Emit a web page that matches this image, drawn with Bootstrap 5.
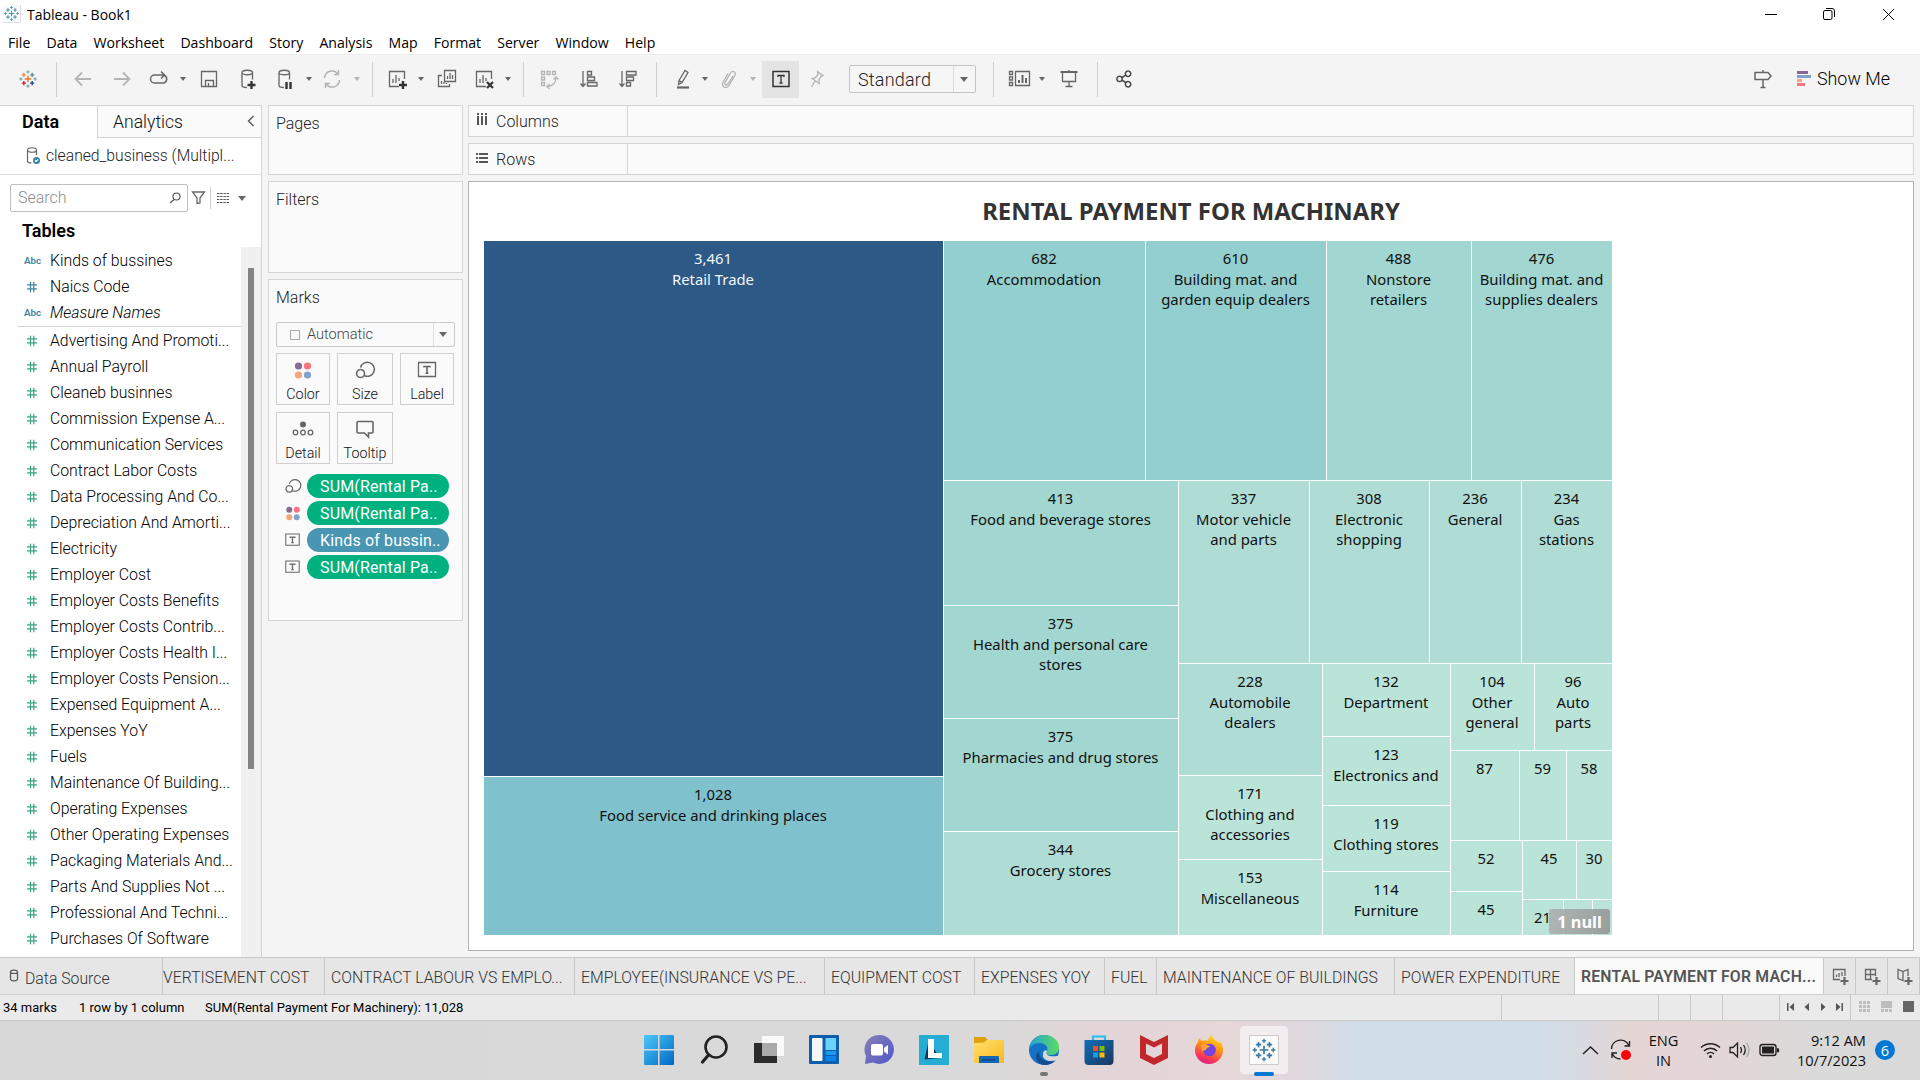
<!DOCTYPE html>
<html lang="en">
<head>
<meta charset="utf-8">
<title>Tableau - Book1</title>
<meta name="viewport" content="width=device-width, initial-scale=1">
<link href="https://cdn.jsdelivr.net/npm/bootstrap@5.3.0/dist/css/bootstrap.min.css" rel="stylesheet">
<style>
:root{--line:#d4d4d4;--ui:Roboto,"Noto Sans",sans-serif;--win:"Open Sans","Noto Sans",sans-serif}
body{width:1920px;height:1080px;overflow:hidden;background:#f4f4f4;font-family:var(--ui);font-weight:300;font-size:16px;line-height:1.2;color:#222;white-space:nowrap}
svg{display:block;flex:none}
.ic{width:24px;height:24px;fill:none;stroke:#666;stroke-width:1.3}
.faint{stroke:#b4b4b4}
.titlebar{height:28px;font:14px var(--win);color:#000}
.titlebar svg{stroke:#000}
.menus{height:26px;font:14.1px/30px var(--win);color:#000;gap:16.1px;padding-left:8px}
.tools{height:51px;background:#f4f4f4;border-top:1px solid #eee;padding:0 0 2px 1px}
.vsep{width:1px;height:35px;background:#cfcfcf;flex:none}
.caret{width:8px;flex:none;display:flex;justify-content:center}
.caret::after{content:"";border:3px solid transparent;border-top:4px solid #666;border-bottom:0}
.caret.dim::after{border-top-color:#b4b4b4}
.big::after{border-width:5px 4px 0}
.g5{margin-left:5px}.g6{margin-left:6px}.g7{margin-left:7px}.g8{margin-left:8px}.g9{margin-left:9px}.g10{margin-left:10px}.g11{margin-left:11px}.g12{margin-left:12px}.g13{margin-left:13px}.g14{margin-left:14px}.g15{margin-left:15px}.g16{margin-left:16px}.g17{margin-left:17px}.g20{margin-left:20px}
.tool-on{width:37px;height:37px;background:#e4e4e4}
.fit{width:127px;height:28px;border:1px solid #c4c4c4;border-radius:2px;background:#f6f6f6;font-size:18px;letter-spacing:.2px}
.fit span:first-child{width:104px;height:100%;padding-left:8px;line-height:27px;border-right:1px solid #dcdcdc}
.work{height:852px}
.side{width:262px;background:#fff;border-right:1px solid var(--line);border-top:1px solid var(--line);flex:none}
.tab-data{width:97px;padding-left:22px;font-weight:600;font-size:18px;line-height:31px;color:#000}
.tab-an{background:#fafafa;border-left:1px solid var(--line);border-bottom:1px solid var(--line);height:32px;padding-left:15px;font-size:17.6px;line-height:33px;color:#111}
.source{height:37px;border-bottom:1px solid #dedede;padding-left:22px;font-size:15.7px}
.find{height:28px;width:178px;border:1px solid #c0c0c0;border-radius:2px;color:#8c8c8c;padding:0 4px 0 7px}
.field{height:26px;color:#000;font-size:15.8px}
.field i{font-style:normal;width:50px;padding-left:27px;flex:none}
.field .abc{font-size:9.8px;font-weight:600;padding-left:24px;color:#3c82a0;line-height:12px}
.rule{height:2px;border-top:1px solid #d4d4d4;margin-left:18px}
.track{width:20px;background:#f0f0f0;height:710px;padding:21px 7px 0;flex:none}
.thumb{width:6px;height:501px;background:#838383}
.cards{width:195px;margin:0 6px;flex:none;gap:6px}
.pane{background:#fafafa;border:1px solid var(--line);font-size:16px;color:#222;padding:8px 7px 0 7px}
.marktype{height:25px;border:1px solid #cacaca;border-radius:2px;font-size:14.6px;color:#444}
.mk{height:52px;border:1px solid #cfcfcf;background:#fafafa;font-size:14.3px;color:#111;padding-top:4px}
.mk svg{margin-bottom:4px}
.pillx{height:24px;width:142px;border-radius:12px;background:#00b180;color:#fff;padding-left:13px;font-size:16px;font-weight:400;letter-spacing:.15px;line-height:25px}
.pillx.dimn{background:#4996b2}
.enc{height:27px}
.enc svg{width:20px;margin:0 4px 0 7px}
.shelf{height:32px;background:#fafafa;border:1px solid var(--line);font-size:16px;color:#222}
.shelf>div{width:159px;border-right:1px solid var(--line);padding-left:7px;height:100%;padding-bottom:3px}
.view{height:770px;background:#fff;border:1px solid #b2b2b2;padding-left:15px}
.view h1{font:700 23.9px/58px "Noto Sans",sans-serif;color:#333;text-align:center;margin:0 0 0 -15px;height:59px}
.map{width:1128px;height:694px;gap:1px;font:14.85px/20px "Noto Sans",sans-serif;color:#111;text-align:center}
.map div{min-width:0;min-height:0}
.sp{display:flex;gap:1px;flex:1 1 0}
.v{flex-direction:column}
.sz{flex:0 0 calc(var(--s)*1px)}
.tile{flex:1 1 0;padding:6px 1px 0 0;overflow:hidden;background:#bbe4d8}
.tile.sz{flex:0 0 calc(var(--s)*1px)}
.tile b{display:block;font-weight:400;line-height:22px}
.c1{background:#2d5986;color:#f2f6fa}.c2{background:#7fc1cc}.c3{background:#94cfcf}.c4{background:#a1d6d1}.c5{background:#afddd5}
.nulls{position:absolute;right:2px;bottom:1px;width:61px;height:25px;border-radius:3px;background:linear-gradient(100deg,rgba(175,178,177,.92),rgba(150,154,153,.95));color:#fff;font:700 16.400px/26px "Noto Sans",sans-serif}
.sheets{height:38px;background:#e6e6e6;border-top:1px solid #c8c8c8;border-bottom:1px solid #cfcfcf;color:#333;font-size:15.8px;line-height:39px}
.sheets>div{border-right:1px solid #c8c8c8;padding-left:6px;overflow:hidden;flex:none}
.sheets .cur{background:#fafafa;font-weight:600;line-height:37px;color:#555;letter-spacing:.2px}
.status{height:25px;background:#eaeaea;font-size:13px;color:#000;line-height:25px;font-weight:400}
.status>div{flex:none}
.cell{border-right:1px solid #c8c8c8;height:25px}
.taskbar{height:60px;border-top:1px solid #c9c9c9;background:linear-gradient(90deg,#d8d8d9 0,#d9d9d9 52%,#e2d5d7 56%,#e6d7d9 64%,#dfd8de 68%,#cfdee9 71%,#cfdee9 80%,#dcd9de 83%,#e6d5d5 85%,#e2d6d7 90%,#dadada 95%,#d9d9d9 100%);font:14.6px/20px var(--win);color:#111}
.app{width:55px;height:54px;flex:none;display:flex;align-items:center;justify-content:center;position:relative}
.now .plate{width:48px;height:48px;border-radius:4px;background:#f3edf0;display:flex;align-items:center;justify-content:center}
.dot{position:absolute;bottom:1px;height:4px;border-radius:2px;background:#777;width:8px}
.now .dot{background:#0078d4;width:20px}
.note{width:20px;height:20px;border-radius:50%;background:#0078d4;color:#fff;text-align:center}
</style>
</head>
<body>
<svg width="0" height="0" class="position-absolute">
<symbol id="tb" viewBox="0 0 24 24"><g fill="none" stroke-width="1.6"><path stroke="var(--a,#e8762c)" d="M12 8v8M8 12h8"/><path stroke="var(--b,#c72035)" d="M7 14.500v5M4.500 17h5"/><path stroke="var(--c,#eb912c)" d="M7 4.500v5M4.500 7h5"/><path stroke="var(--d,#59879b)" d="M17 4.500v5M14.500 7h5"/><path stroke="var(--e,#1f457e)" d="M17 14.500v5M14.500 17h5"/><path stroke="var(--f,#7099a6)" stroke-width="1.200" d="M12 1.500v4M10 3.500h4M12 18.500v4M10 20.500h4M3.500 10v4M1.500 12h4M20.500 10v4M18.500 12h4"/></g></symbol>
<symbol id="sheet" viewBox="0 0 24 24"><path d="M19.500 12V4.500h-15v15H14M8 16v-4M11 16V8M14 14v-3"/></symbol>
<symbol id="cyl" viewBox="0 0 24 24"><path d="M6 5.500v13c0 1.200 2 2 5 2M16.500 5.500v7M6 5.500c0-3 10.500-3 10.500 0s-10.500 3-10.500 0"/></symbol>
<symbol id="lab" viewBox="0 0 24 24"><path d="M3.500 4.500h17v14h-17z" /><path stroke-width="1.600" d="M9 9.500v-1h6v1M12 8.500v7M10.500 15.300h3"/></symbol>
<symbol id="siz" viewBox="0 0 24 24"><path stroke-width="1.500" d="M7.600 9.500a7 7 0 1 1 4 8.200M7.500 11.500a4 4 0 1 0 .1 0"/></symbol>
<symbol id="col" viewBox="0 0 24 24"><g stroke="none"><circle cx="7.500" cy="8" r="3.600" fill="#866a94"/><circle cx="16.500" cy="8" r="3.600" fill="#f67480"/><circle cx="7.500" cy="17" r="3.600" fill="#f1a578"/><circle cx="16.500" cy="17" r="3.600" fill="#7fa3cb"/></g></symbol>
<symbol id="hash" viewBox="0 0 10 12"><path fill="none" stroke-width="1.200" d="M3.500.8v10.400M6.800.8v10.400M0 3.900h10M0 7.900h10"/></symbol>
</svg>

<header class="bg-white">
<div class="titlebar d-flex align-items-center">
<span class="bg-light border-end border-bottom" style="--a:#4a90b5;--b:#4a90b5;--c:#4a90b5;--d:#4a90b5;--e:#4a90b5;--f:#4a90b5;margin-left:3px"><svg width="17" height="17"><use href="#tb"/></svg></span>
<span style="margin-left:6px">Tableau - Book1</span>
<div class="ms-auto d-flex">
<svg width="58" height="24" fill="none"><path d="M23 12.500h12"/></svg>
<svg width="58" height="24" fill="none"><rect x="23.500" y="8.500" width="8.500" height="9" rx="1.500"/><path d="M26 6.500h6q2.500 0 2.500 2.500v6"/></svg>
<svg width="62" height="24" fill="none"><path d="M25 7l11 11M36 7L25 18"/></svg>
</div></div>
<nav class="menus d-flex"><span>File</span><span>Data</span><span>Worksheet</span><span>Dashboard</span><span>Story</span><span>Analysis</span><span>Map</span><span>Format</span><span>Server</span><span>Window</span><span>Help</span></nav>
</header>

<div class="tools d-flex align-items-center">
<svg class="g15" width="24" height="20"><use href="#tb"/></svg>
<span class="vsep g16"></span>
<svg class="ic faint g14" stroke-width="2"><path stroke-width="1.800" d="M20 12H5M11 5.500L4.500 12l6.500 6.500"/></svg>
<svg class="ic faint g15"><path stroke-width="1.800" d="M4 12h15M13 5.500l6.500 6.500-6.500 6.500"/></svg>
<svg class="ic g13"><path stroke-width="1.500" d="M13 16H7.500a4 4 0 0 1 0-8H17M14 4.500L17.500 8 14 11.500M17.500 8.500a4 4 0 0 1-1 7.500H12"/></svg>
<span class="caret g8"></span>
<svg class="ic g10"><path d="M4.500 4.500h15v15h-15zM8.500 19.500v-6h8v6M11.500 19v-3"/></svg>
<svg class="ic g15"><use href="#cyl"/><path stroke="#333" stroke-width="2.400" d="M15.500 14v8M11.500 18h8"/></svg>
<svg class="ic g13"><use href="#cyl"/><path stroke="#333" stroke-width="2.400" d="M13.500 15v7M17.500 15v7"/></svg>
<span class="caret g8"></span>
<svg class="ic faint g7"><path stroke-width="1.500" d="M4.500 11a7.500 7.500 0 0 1 13.500-4M19.500 13a7.500 7.500 0 0 1-13.500 4M18.500 3v4.500H14M5.500 21v-4.500H10"/></svg>
<span class="caret dim g9"></span>
<span class="vsep g11"></span>
<svg class="ic g12"><use href="#sheet"/><path stroke="#333" stroke-width="2.400" d="M18 14v8M14 18h8"/></svg>
<span class="caret g8"></span>
<svg class="ic g10"><path d="M9.500 3.500h11v11h-11zM7 8.500H3.500v11h11V17M12.500 12V9M15 12V6M17.500 12V8M6.500 17v-3M9 17v-2M11.500 17v-1"/></svg>
<svg class="ic g13"><use href="#sheet"/><path stroke="#333" stroke-width="2.200" d="M15 15l6 6M21 15l-6 6"/></svg>
<span class="caret g8"></span>
<span class="vsep g11"></span>
<svg class="ic faint g13"><path d="M4.500 4.500h3v3h-3zM10 4.500h3v3h-3zM15.500 4.500h3v3h-3zM4.500 10h3v3h-3zM4.500 15.500h3v3h-3zM19 10.500c0 5-2.500 8.500-8.500 9M16.500 12.500l2.500-2.500 2.500 2.500M12.500 17l-2.500 2.500 2.500 2.500"/></svg>
<svg class="ic g16"><path d="M6 4v15M3.500 16.500L6 19.500l2.500-3M10.500 4.500h4v3.500h-4zM10.500 10h7v3.500h-7zM10.500 15.500h9.500V19h-9.500z"/></svg>
<svg class="ic g15"><path d="M6 4v15M3.500 16.500L6 19.500l2.500-3M10.500 4.500h9.500V8h-9.500zM10.500 10h7v3.500h-7zM10.500 15.500h4V19h-4z"/></svg>
<span class="vsep g16"></span>
<svg class="ic g14"><path d="M8 13.500L14 3.500l3 2-6 10-3.500 2zM8 13.500l3 2"/><path stroke-width="2.200" d="M6 20.500h12"/></svg>
<span class="caret g6"></span>
<svg class="ic faint g8"><path d="M16 9l-5 8c-1.500 2-4 .5-3-1.500L13.500 6c2-3 6-1 4.500 2l-6 10.500c-2.500 4-8 1.500-6-3L11 6.500"/></svg>
<span class="caret dim g8"></span>
<span class="tool-on g5 d-flex align-items-center justify-content-center"><svg class="ic" style="stroke:#333"><path stroke-width="1.500" d="M4 4.500h16v15H4z"/><path d="M9 10V8.500h6V10M12 8.500v7.500M10.500 16h3"/></svg></span>
<svg class="ic faint g6"><path d="M12.500 4.500l5.500 4-2 .8-2 3.200.2 4-7-5 3.300-.8 2.500-3.200zM10 14l-3.500 6"/></svg>
<div class="fit g20 d-flex align-items-center"><span>Standard</span><span class="caret big ms-1 ps-1"></span></div>
<span class="vsep g17"></span>
<svg class="ic g14"><path d="M1.500 4.500h3v3h-3zM1.500 10h3v3h-3zM1.500 15.500h3v3h-3zM7.500 4.500h14v14h-14z"/><path stroke-width="2" d="M11 16v-3M14.500 16V8M18 16v-5"/></svg>
<span class="caret g6"></span>
<svg class="ic g11"><path stroke-width="2" d="M3.500 5h17"/><path d="M5.500 5v9.500h13V5M12 3v1M12 14.500v5M8.500 19.500h7"/></svg>
<span class="vsep g16"></span>
<svg class="ic g14" style="stroke:#444"><path stroke-width="1.500" d="M16 4a2.700 2.700 0 1 0 .1 0M16 14.500a2.700 2.700 0 1 0 .1 0M7.500 9.200a2.700 2.700 0 1 0 .1 0M13.700 8.200L10 10.500M13.700 15.500L10 13.200"/></svg>
<svg class="ic ms-auto"><path stroke-width="1.500" d="M4 5.500h13l3 3.500-3 3.500H4zM12 3v2M12 12.500V20M9.500 20.500h5"/></svg>
<svg width="14" height="16" style="margin-left:22px"><path fill="#866a94" d="M0 0h11v3H0z"/><path fill="#7fa3cb" d="M0 4h14v3H0z"/><path fill="#f1a578" d="M0 8h5v3H0z"/><path fill="#f67480" d="M0 12h8v3H0z"/></svg>
<span class="text-black" style="font-size:17.900px;margin:0 30px 0 6px">Show Me</span>
</div>

<div class="work d-flex">
<aside class="side">
<div class="d-flex"><div class="tab-data">Data</div><div class="tab-an flex-grow-1 d-flex">Analytics<svg class="ms-auto" style="margin-right:6px" width="8" height="30" fill="none" stroke="#555" stroke-width="1.400"><path d="M6.500 10L1.500 15l5 5"/></svg></div></div>
<div class="source d-flex align-items-center"><svg width="24" height="24" fill="none" stroke="#666" stroke-width="1.200"><path d="M5.500 6v11c0 1 1.500 2 4 2M14.500 6v5M5.500 6c0-3 9-3 9 0s-9 3-9 0"/><circle cx="14.500" cy="16.500" r="3.500" fill="#3c82a0" stroke="none"/><path stroke="#fff" d="M13 16.500l1 1 2-2"/></svg><span>cleaned_business (Multipl...</span></div>
<div class="d-flex align-items-center" style="padding:9px 0 0 10px">
<div class="find d-flex align-items-center"><span class="me-auto">Search</span><svg width="16" height="16" fill="none" stroke="#555" stroke-width="1.200"><circle cx="9.500" cy="6.500" r="3.500"/><path d="M7 9.500L3 13"/></svg></div>
<svg width="22" height="22" fill="none" stroke="#666" stroke-width="1.300"><path d="M4.500 5h12l-4.500 6v5l-3 .5v-5.500z"/></svg>
<span class="vsep" style="height:22px"></span>
<svg width="12" height="10" style="margin-left:6px" stroke="#555" stroke-width="1.200" stroke-dasharray="2.400 .8"><path d="M0 .5h12M0 3.500h12M0 6.500h12M0 9.500h12"/></svg>
<span class="caret big g9"></span></div>
<div class="text-black" style="font:600 18px/22px var(--ui);padding:8px 0 0 22px;height:35px">Tables</div>
<div class="d-flex"><div class="flex-grow-1 overflow-hidden" style="padding-top:1px" id="fields"></div><div class="track"><div class="thumb"></div></div></div>
</aside>

<section class="cards d-flex flex-column">
<div class="pane" style="height:70px">Pages</div>
<div class="pane" style="height:92px">Filters</div>
<div class="pane" style="height:342px">
<div style="height:34px">Marks</div>
<div class="marktype d-flex align-items-center"><svg width="30" height="20" fill="none" stroke="#aaa"><rect x="13.500" y="5.500" width="9" height="9"/></svg>Automatic<span class="ms-auto h-100" style="border-left:1px solid #ddd;width:6px"></span><span class="caret big" style="margin-right:7px"></span></div>
<div class="d-flex" style="gap:7px;margin-top:6px">
<div class="mk text-center" style="width:54px"><svg class="ic mx-auto"><use href="#col"/></svg>Color</div>
<div class="mk text-center" style="width:56px"><svg class="ic mx-auto"><use href="#siz"/></svg>Size</div>
<div class="mk text-center" style="width:54px"><svg class="ic mx-auto"><use href="#lab"/></svg>Label</div></div>
<div class="d-flex" style="gap:7px;margin:7px 0 10px">
<div class="mk text-center" style="width:54px"><svg class="ic mx-auto"><circle cx="12" cy="7.500" r="3" fill="#666" stroke="none"/><circle cx="4.500" cy="15.500" r="2.300"/><circle cx="12" cy="15.500" r="2.300"/><circle cx="19.500" cy="15.500" r="2.300"/></svg>Detail</div>
<div class="mk text-center" style="width:56px"><svg class="ic mx-auto"><path stroke-width="1.600" d="M5 4.500h14q1 0 1 1V15q0 1-1 1h-3.500v4l-4-4H5q-1 0-1-1V5.500q0-1 1-1z"/></svg>Tooltip</div></div>
<div class="enc d-flex"><svg class="ic"><use href="#siz" width="20"/></svg><div class="pillx">SUM(Rental Pa..</div></div>
<div class="enc d-flex"><svg class="ic"><use href="#col" width="20"/></svg><div class="pillx">SUM(Rental Pa..</div></div>
<div class="enc d-flex"><svg class="ic"><use href="#lab" width="19"/></svg><div class="pillx dimn">Kinds of bussin..</div></div>
<div class="enc d-flex"><svg class="ic"><use href="#lab" width="19"/></svg><div class="pillx">SUM(Rental Pa..</div></div>
</div>
</section>

<main class="flex-grow-1 d-flex flex-column" style="gap:6px;margin:0 6px 0 -1px">
<div class="shelf"><div class="d-flex align-items-center"><svg width="20" height="14" stroke="#555" stroke-width="2"><path d="M2 0v2M6 0v2M10 0v2M2 3v9M6 3v9M10 3v9"/></svg><span class="pt-1">Columns</span></div></div>
<div class="shelf"><div class="d-flex align-items-center"><svg width="20" height="14" stroke="#555" stroke-width="2"><path d="M0 3h2M0 7h2M0 11h2M3 3h9M3 7h9M3 11h9"/></svg><span class="pt-1">Rows</span></div></div>
<div class="view">
<h1>RENTAL PAYMENT FOR MACHINARY</h1>
<div class="map d-flex position-relative">
<div class="sp v sz" style="--s:459"><div class="tile sz c1" style="--s:535"><b>3,461</b>Retail Trade</div><div class="tile c2"><b>1,028</b>Food service and drinking places</div></div>
<div class="sp v">
<div class="sp sz" style="--s:239"><div class="tile sz c3" style="--s:201"><b>682</b>Accommodation</div><div class="tile sz c3" style="--s:180"><b>610</b>Building mat. and<br>garden equip dealers</div><div class="tile sz c4" style="--s:144"><b>488</b>Nonstore<br>retailers</div><div class="tile c4"><b>476</b>Building mat. and<br>supplies dealers</div></div>
<div class="sp">
<div class="sp v sz" style="--s:234"><div class="tile sz c4" style="--s:124"><b>413</b>Food and beverage stores</div><div class="tile sz c4" style="--s:112"><b>375</b>Health and personal care<br>stores</div><div class="tile sz c4" style="--s:112"><b>375</b>Pharmacies and drug stores</div><div class="tile c5"><b>344</b>Grocery stores</div></div>
<div class="sp v">
<div class="sp sz" style="--s:182"><div class="tile sz c5" style="--s:130"><b>337</b>Motor vehicle<br>and parts</div><div class="tile sz c5" style="--s:119"><b>308</b>Electronic<br>shopping</div><div class="tile sz c5" style="--s:91"><b>236</b>General</div><div class="tile c5"><b>234</b>Gas<br>stations</div></div>
<div class="sp">
<div class="sp v sz" style="--s:143"><div class="tile sz c5" style="--s:111"><b>228</b>Automobile<br>dealers</div><div class="tile sz" style="--s:83"><b>171</b>Clothing and<br>accessories</div><div class="tile"><b>153</b>Miscellaneous</div></div>
<div class="sp v sz" style="--s:127"><div class="tile sz" style="--s:72"><b>132</b>Department</div><div class="tile sz" style="--s:68"><b>123</b>Electronics and</div><div class="tile sz" style="--s:65"><b>119</b>Clothing stores</div><div class="tile"><b>114</b>Furniture</div></div>
<div class="sp v">
<div class="sp sz" style="--s:86"><div class="tile sz" style="--s:83"><b>104</b>Other<br>general</div><div class="tile"><b>96</b>Auto<br>parts</div></div>
<div class="sp sz" style="--s:89"><div class="tile sz" style="--s:68"><b>87</b></div><div class="tile sz" style="--s:46"><b>59</b></div><div class="tile"><b>58</b></div></div>
<div class="sp"><div class="sp v sz" style="--s:71"><div class="tile sz" style="--s:50"><b>52</b></div><div class="tile"><b>45</b></div></div>
<div class="sp v"><div class="sp sz" style="--s:58"><div class="tile sz" style="--s:53"><b>45</b></div><div class="tile"><b>30</b></div></div><div class="sp"><div class="tile sz" style="--s:40"><b>21</b></div><div class="tile sz" style="--s:28"></div><div class="tile"></div></div></div></div>
</div></div></div></div></div>
<div class="nulls">1 null</div>
</div></div>
</main>
</div>

<div class="sheets d-flex">
<div style="width:163px" class="d-flex align-items-center"><svg width="19" height="20" fill="none" stroke="#555" stroke-width="1.200"><path d="M4.500 6v7c0 2.500 7 2.500 7 0V6c0-2.500-7-2.500-7 0 0 2 7 2 7 0"/></svg><span class="pt-1">Data Source</span></div>
<div style="width:162px;padding-left:0">VERTISEMENT COST</div>
<div style="width:250px">CONTRACT LABOUR VS EMPLO...</div>
<div style="width:250px">EMPLOYEE(INSURANCE VS PE...</div>
<div style="width:150px">EQUIPMENT COST</div>
<div style="width:130px">EXPENSES YOY</div>
<div style="width:52px">FUEL</div>
<div style="width:238px">MAINTENANCE OF BUILDINGS</div>
<div style="width:180px">POWER EXPENDITURE</div>
<div style="width:249px" class="cur">RENTAL PAYMENT FOR MACH...</div>
<div style="width:32px"><svg class="ic" style="margin-top:7px"><path d="M15 11V4.500H3.500v10H10M6.500 12V9.500M9 12V8M12 11V7"/><path stroke-width="2.200" d="M14.500 12v8M10.500 16h8"/></svg></div>
<div style="width:32px"><svg class="ic" style="margin-top:7px"><path d="M13.500 11V4.500H3.500v10H10M8.500 4.500v10M3.500 9.500h10"/><path stroke-width="2.200" d="M14.500 12v8M10.500 16h8"/></svg></div>
<div style="width:32px"><svg class="ic" style="margin-top:7px"><path d="M14 11V4.500l-5 2-5-2v9l5 2V6.500"/><path stroke-width="2.200" d="M14.500 12v8M10.500 16h8"/></svg></div>
</div>
<div class="status d-flex">
<div style="width:76px;padding-left:3px">34 marks</div><div style="width:126px;padding-left:3px">1 row by 1 column</div><div style="width:1300px;padding-left:3px" class="cell">SUM(Rental Payment For Machinery): 11,028</div>
<div class="cell" style="width:157px"></div><div class="cell" style="width:32px"></div><div class="cell" style="width:32px"></div><div class="cell" style="width:57px"></div>
<div class="cell" style="width:71px"><svg width="70" height="24" fill="#555"><path d="M7 8h1.500v8H7zM14 8v8l-4.500-4zM29 8v8l-4.500-4zM41 8v8l4.500-4zM56 8v8l4.500-4zM61.500 8H63v8h-1.500z"/></svg></div>
<div><svg width="69" height="24" fill="#bdbdbd"><path d="M8 6h3v3H8zM12 6h3v3h-3zM16 6h3v3h-3zM8 10h3v3H8zM12 10h3v3h-3zM16 10h3v3h-3zM8 14h3v3H8zM12 14h3v3h-3zM16 14h3v3h-3zM30 6h11v7H30zM30 14h3v3h-3zM34 14h3v3h-3zM38 14h3v3h-3z"/><path fill="#666" d="M52 6h11v11H52z"/></svg></div>
</div>

<footer class="taskbar d-flex">
<div class="d-flex" style="margin:2px 0 0 631px">
<div class="app"><svg width="30" height="30"><linearGradient id="w" x2="1" y2="1"><stop stop-color="#4cc8f8"/><stop offset="1" stop-color="#0067c4"/></linearGradient><path fill="url(#w)" d="M0 1q0-1 1-1h13v14H0zM15.500 0H29q1 0 1 1v13H15.500zM0 15.500h14V30H1q-1 0-1-1zM15.500 15.500H30V29q0 1-1 1H15.500z"/></svg></div>
<div class="app"><svg width="30" height="30" fill="none" stroke="#222"><circle cx="17" cy="12" r="10.500" stroke-width="2.600"/><path stroke-width="3.200" stroke-linecap="round" d="M9.500 20L3.500 27"/></svg></div>
<div class="app"><svg width="30" height="30"><path fill="#2c2c2c" d="M0 8h23v20H0z"/><path fill="#fafafa" d="M8 1h22v20H8z"/><path fill="#aaa" d="M8 8h15v13H8z"/></svg></div>
<div class="app"><svg width="30" height="30"><rect width="30" height="29" rx="1" fill="#0f5eae"/><rect x="3" y="3" width="10.500" height="23" rx="1" fill="#f5f5f5"/><path fill="#69d3fb" d="M16.500 3H27v12H16.500z"/><path fill="#1d96ee" d="M16.500 16H27v4H16.500z"/><path fill="#0a84e8" d="M16.500 21H27v5H16.500z"/></svg></div>
<div class="app"><svg width="30" height="30"><linearGradient id="t" y2="1"><stop stop-color="#8a7fb8"/><stop offset="1" stop-color="#5056c8"/></linearGradient><path fill="url(#t)" d="M15 0a14.500 14.500 0 1 1-6 27.500L1 29l1-8A14.500 14.500 0 0 1 15 0z"/><rect x="7" y="9" width="12" height="11.500" rx="2" fill="#fff"/><path fill="#fff" d="M20 13l4-3v9.500l-4-3z"/></svg></div>
<div class="app"><svg width="30" height="30"><path fill="#25add6" d="M0 0h30v30H0z"/><path fill="#10355f" d="M10 4L5.500 24.500 20 23z"/><path fill="#fff" d="M9 4h6v14h8v5H9z"/></svg></div>
<div class="app"><svg width="30" height="30"><linearGradient id="y" y2="1"><stop stop-color="#ffe070"/><stop offset="1" stop-color="#fbb81b"/></linearGradient><path fill="#dd9f0b" d="M0 2h11l3 3v6H0z"/><path fill="url(#y)" d="M0 8l10-.5L13 5h17v23H0z"/><path fill="#1467b3" d="M5 28v-6q0-1 1-1h18q1 0 1 1v6z"/><path fill="#0a4a8a" d="M8 24h13v1.500H8z"/></svg></div>
<div class="app"><svg width="30" height="30"><linearGradient id="e" x2="1"><stop stop-color="#279fd9"/><stop offset="1" stop-color="#5bdc60"/></linearGradient><circle cx="15" cy="15" r="15" fill="#1473c5"/><path fill="url(#e)" d="M0 14C1 5 8 0 15 0c9 0 15 6 15 12 0 5-3 8-8 8-4 0-5-2-4-4 2-5-3-8-8-8C5 8 2 11 0 14z"/><path fill="#124c91" d="M10 16c0 9 8 13 17 9-5 6-13 6-17 3-4-4-4-9 0-12z"/><path fill="#dcd7d9" d="M18 16c-2 4 2 6 10 5h2v3l-2 1c-9 3-15-1-14-6 0-3 3-5 4-3z"/></svg><span class="dot"></span></div>
<div class="app"><svg width="30" height="32"><path fill="none" stroke="#25c0f0" stroke-width="2.200" d="M9 7V2.500h12V7"/><linearGradient id="s" y2="1"><stop stop-color="#0f70b8"/><stop offset="1" stop-color="#1c355f"/></linearGradient><path fill="url(#s)" d="M.5 6h29v21q0 4-4 4h-21q-4 0-4-4z"/><path fill="#f25022" d="M9 12h5v5H9z"/><path fill="#7fba00" d="M15.500 12h5v5h-5z"/><path fill="#00a4ef" d="M9 18.500h5v5H9z"/><path fill="#ffb900" d="M15.500 18.500h5v5h-5z"/></svg></div>
<div class="app"><svg width="28" height="30"><path fill="#c1282c" d="M0 0l14 7 14-7v23l-14 7-14-7zM6 8.500V19l8 4 8-4V8.500l-8 4z" fill-rule="evenodd"/></svg></div>
<div class="app"><svg width="30" height="30"><linearGradient id="f" x1=".7" x2=".3" y2="1"><stop stop-color="#ffe226"/><stop offset=".45" stop-color="#ff8a16"/><stop offset=".8" stop-color="#f7345c"/><stop offset="1" stop-color="#d41f86"/></linearGradient><path fill="url(#f)" d="M4 7l1-4 3 3c2-1 4-1 6 0 0-3 2-5 4-6 0 3 3 5 5 6l2 2 2-1c1 2 2 5 2 8a14 14 0 0 1-28 0c0-3 1-6 3-8z"/><circle cx="15.500" cy="15" r="6.300" fill="#7543e0"/><path fill="#ffa436" d="M7 10c3-2 6 0 9 1-1 2-4 2-4 4l-4 1z"/></svg></div>
<div class="app now"><span class="plate"><svg width="30" height="30" style="--a:#3a78a0;--b:#3a78a0;--c:#3a78a0;--d:#3a78a0;--e:#3a78a0;--f:#3a78a0"><path fill="#fafafa" stroke="#ccc" d="M.5.500h29v29H.5z"/><use href="#tb" x="2" y="2" width="26" height="26"/></svg></span><span class="dot"></span></div>
</div>
<div class="ms-auto d-flex align-items-center" style="height:58px">
<svg width="26" height="20" fill="none" stroke="#222" stroke-width="1.500" style="margin-right:6px"><path d="M6 14l7.500-7 7.500 7"/></svg>
<svg width="24" height="24" fill="none" stroke="#222" stroke-width="1.400"><path d="M2.500 11a9 9 0 0 1 17-4M20.500 3v5h-5M3 20v-5h5M3.500 16a9 9 0 0 0 8 5"/><circle cx="17" cy="17" r="5" fill="#f00" stroke="none"/></svg>
<div class="text-center" style="width:53px;margin-left:4px">ENG<br>IN</div>
<svg width="24" height="20" fill="none" stroke="#222" stroke-width="1.500" style="margin-left:9px"><path d="M2 7.500a14 14 0 0 1 19 0M5 11a9 9 0 0 1 13 0M8 14a5 5 0 0 1 7 0"/><circle cx="11.500" cy="16.500" r="1.500" fill="#222" stroke="none"/></svg>
<svg width="24" height="20" fill="none" stroke="#222" stroke-width="1.300" style="margin-left:6px"><path d="M1 7.500h3L8.500 3v14L4 12.500H1zM11.500 7q2 3 0 6M14.500 5q3.500 5 0 10"/><path stroke="#aaa" d="M17.500 3q5 7 0 14"/></svg>
<svg width="22" height="20" style="margin-left:6px"><rect x="1" y="4.500" width="16" height="11" rx="2.500" fill="none" stroke="#222" stroke-width="1.400"/><path fill="#222" d="M3 6.500h12v7H3zM18 8q3 0 2 4l-2 .5z"/></svg>
<div class="text-end" style="width:82px;margin-left:3px">9:12 AM<br>10/7/2023</div>
<span class="note" style="margin:0 25px 0 9px">6</span>
</div>
</footer>
<script>
const fields = ["Kinds of bussines","Naics Code","Measure Names","Advertising And Promoti...","Annual Payroll","Cleaneb businnes","Commission Expense A...","Communication Services","Contract Labor Costs","Data Processing And Co...","Depreciation And Amorti...","Electricity","Employer Cost","Employer Costs Benefits","Employer Costs Contrib...","Employer Costs Health I...","Employer Costs Pension...","Expensed Equipment A...","Expenses YoY","Fuels","Maintenance Of Building...","Operating Expenses","Other Operating Expenses","Packaging Materials And...","Parts And Supplies Not ...","Professional And Techni...","Purchases Of Software"];
document.getElementById("fields").innerHTML = fields.map((name, i) => {
  const icon = i === 0 || i === 2 ? '<i class="abc">Abc</i>' : `<i><svg width="10" height="12" stroke="${i < 3 ? "#3c82a0" : "#3aa57c"}"><use href="#hash"/></svg></i>`;
  return `<div class="field d-flex align-items-center${i === 2 ? " fst-italic" : ""}">${icon}<span>${name}</span></div>` + (i === 2 ? '<div class="rule"></div>' : "");
}).join("");
</script>
<script src="https://cdn.jsdelivr.net/npm/bootstrap@5.3.0/dist/js/bootstrap.bundle.min.js"></script>
</body>
</html>
